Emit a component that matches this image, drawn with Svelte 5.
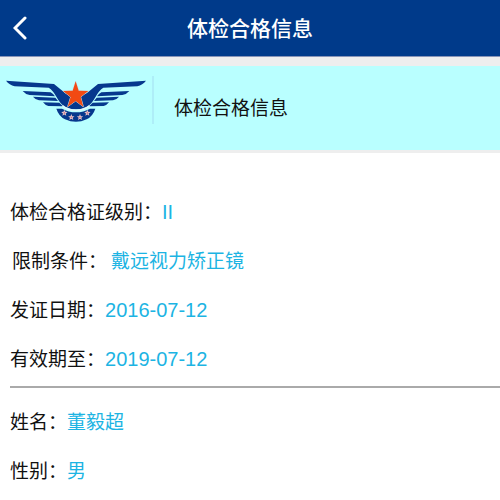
<script lang="ts">
	const certificate = [
		{ label: '体检合格证级别', value: 'II', latin: true },
		{ label: '限制条件', value: '戴远视力矫正镜', spaced: true },
		{ label: '发证日期', value: '2016-07-12', latin: true },
		{ label: '有效期至', value: '2019-07-12', latin: true }
	];

	const person = [
		{ label: '姓名', value: '董毅超' },
		{ label: '性别', value: '男' }
	];

	const badgeStars = [
		[193, 159],
		[214, 172],
		[240, 172],
		[262, 159]
	];

	const star = 'M0-10 2.6-3.4 9.5-3.1 4.1 1.3 5.9 8.1 0 4.3-5.9 8.1-4.1 1.3-9.5-3.1-2.6-3.4Z';

	function goBack() {
		history.back();
	}
</script>

{#snippet fields(rows: { label: string; value: string; spaced?: boolean; latin?: boolean }[])}
	<dl class="fields">
		{#each rows as row}
			<div class="field" class:spaced={row.spaced}>
				<dt>{row.label}：</dt>
				<dd class:latin={row.latin}>{row.value}</dd>
			</div>
		{/each}
	</dl>
{/snippet}

<div class="page">
	<header class="navbar">
		<button class="back" type="button" aria-label="返回" onclick={goBack}>
			<svg width="14" height="24" viewBox="0 0 14 24" aria-hidden="true">
				<path d="M12 2 2 12l10 10" fill="none" stroke="#fff" stroke-width="3" stroke-linecap="round" />
			</svg>
		</button>
		<h1>体检合格信息</h1>
	</header>

	<section class="banner">
		<div class="emblem">
			<svg width="140" height="43" viewBox="18 60 420 129" aria-hidden="true">
				<g fill="#06388d">
					<g id="wing">
						<path d="M18 62 162 72 196 100 228 112V148Q208 148 194 140Q181 132 170 112Q159 91 146 83L44 79Q28 75 18 62Z" />
						<path d="M68 93 152 97Q160 101 165 109L89 105Q76 103 68 93Z" />
						<path d="M99 110 166 113 174 123 117 121Q106 119 99 110Z" />
						<path d="M129 127 178 128Q184 135 191 139L145 138Q136 136 129 127Z" />
					</g>
					<use href="#wing" transform="translate(456 0) scale(-1 1)" />
					<path d="M169 146H186Q205 157 228 157Q251 157 270 146H286Q279 168 260 178Q228 193 195 178Q176 168 169 146Z" />
				</g>
				<path
					d="M187 137Q205 151 228 151Q251 151 269 137"
					fill="none"
					stroke="#e0f8fb"
					stroke-width="5"
				/>
				<path
					d="M227 64 236 92 265 93 242 111 250 140 227 123 203 140 212 111 189 93 218 92Z"
					fill="#f24a13"
					stroke="#c5dfe8"
					stroke-width="3"
					paint-order="stroke"
				/>
				{#each badgeStars as [x, y]}
					<path d={star} transform="translate({x} {y})" fill="#e9c2c8" />
					<circle cx={x} cy={y} r="2" fill="#b85e75" />
				{/each}
			</svg>
		</div>
		<h2>体检合格信息</h2>
	</section>

	<main>
		{@render fields(certificate)}
		<hr />
		{@render fields(person)}
	</main>
</div>

<style>
	:global(body) {
		margin: 0;
		background: #fff;
	}
	.page {
		font-family: 'Liberation Sans', 'Noto Sans CJK SC', sans-serif;
		font-size: 19px;
		line-height: 29px;
		color: #111;
	}
	.navbar {
		display: grid;
		grid-template-columns: 40px 1fr 40px;
		align-items: center;
		height: 56px;
		background: #003a8a;
		border-bottom: 1px solid #8794b8;
	}
	.back {
		display: flex;
		justify-content: center;
		padding: 8px 0;
		border: 0;
		background: none;
		cursor: pointer;
	}
	h1,
	h2 {
		margin: 0;
		font-size: inherit;
		font-weight: 400;
	}
	h1 {
		font-size: 21px;
		font-weight: 500;
		text-align: center;
		color: #fff;
	}
	.banner {
		display: flex;
		align-items: center;
		gap: 20px;
		height: 84px;
		background: #b9ffff;
		border-top: 9px solid #eee;
		border-bottom: 3px solid #eee;
	}
	.emblem {
		box-sizing: border-box;
		align-self: flex-start;
		height: 48px;
		margin-top: 10px;
		padding: 4px 6px 0;
		border-right: 2px solid #aeeef8;
	}
	.emblem svg {
		display: block;
	}
	main {
		padding: 45px 0 16px 10px;
	}
	.fields {
		display: grid;
		gap: 20px;
		margin: 0;
	}
	.field {
		display: flex;
	}
	.spaced {
		gap: 4px;
		padding-left: 2px;
	}
	dd {
		margin: 0;
		color: #1cb4e3;
	}
	.latin {
		font-size: 20px;
	}
	hr {
		height: 2px;
		margin: 12px 0 20px;
		border: 0;
		background: #aaa;
	}
</style>
